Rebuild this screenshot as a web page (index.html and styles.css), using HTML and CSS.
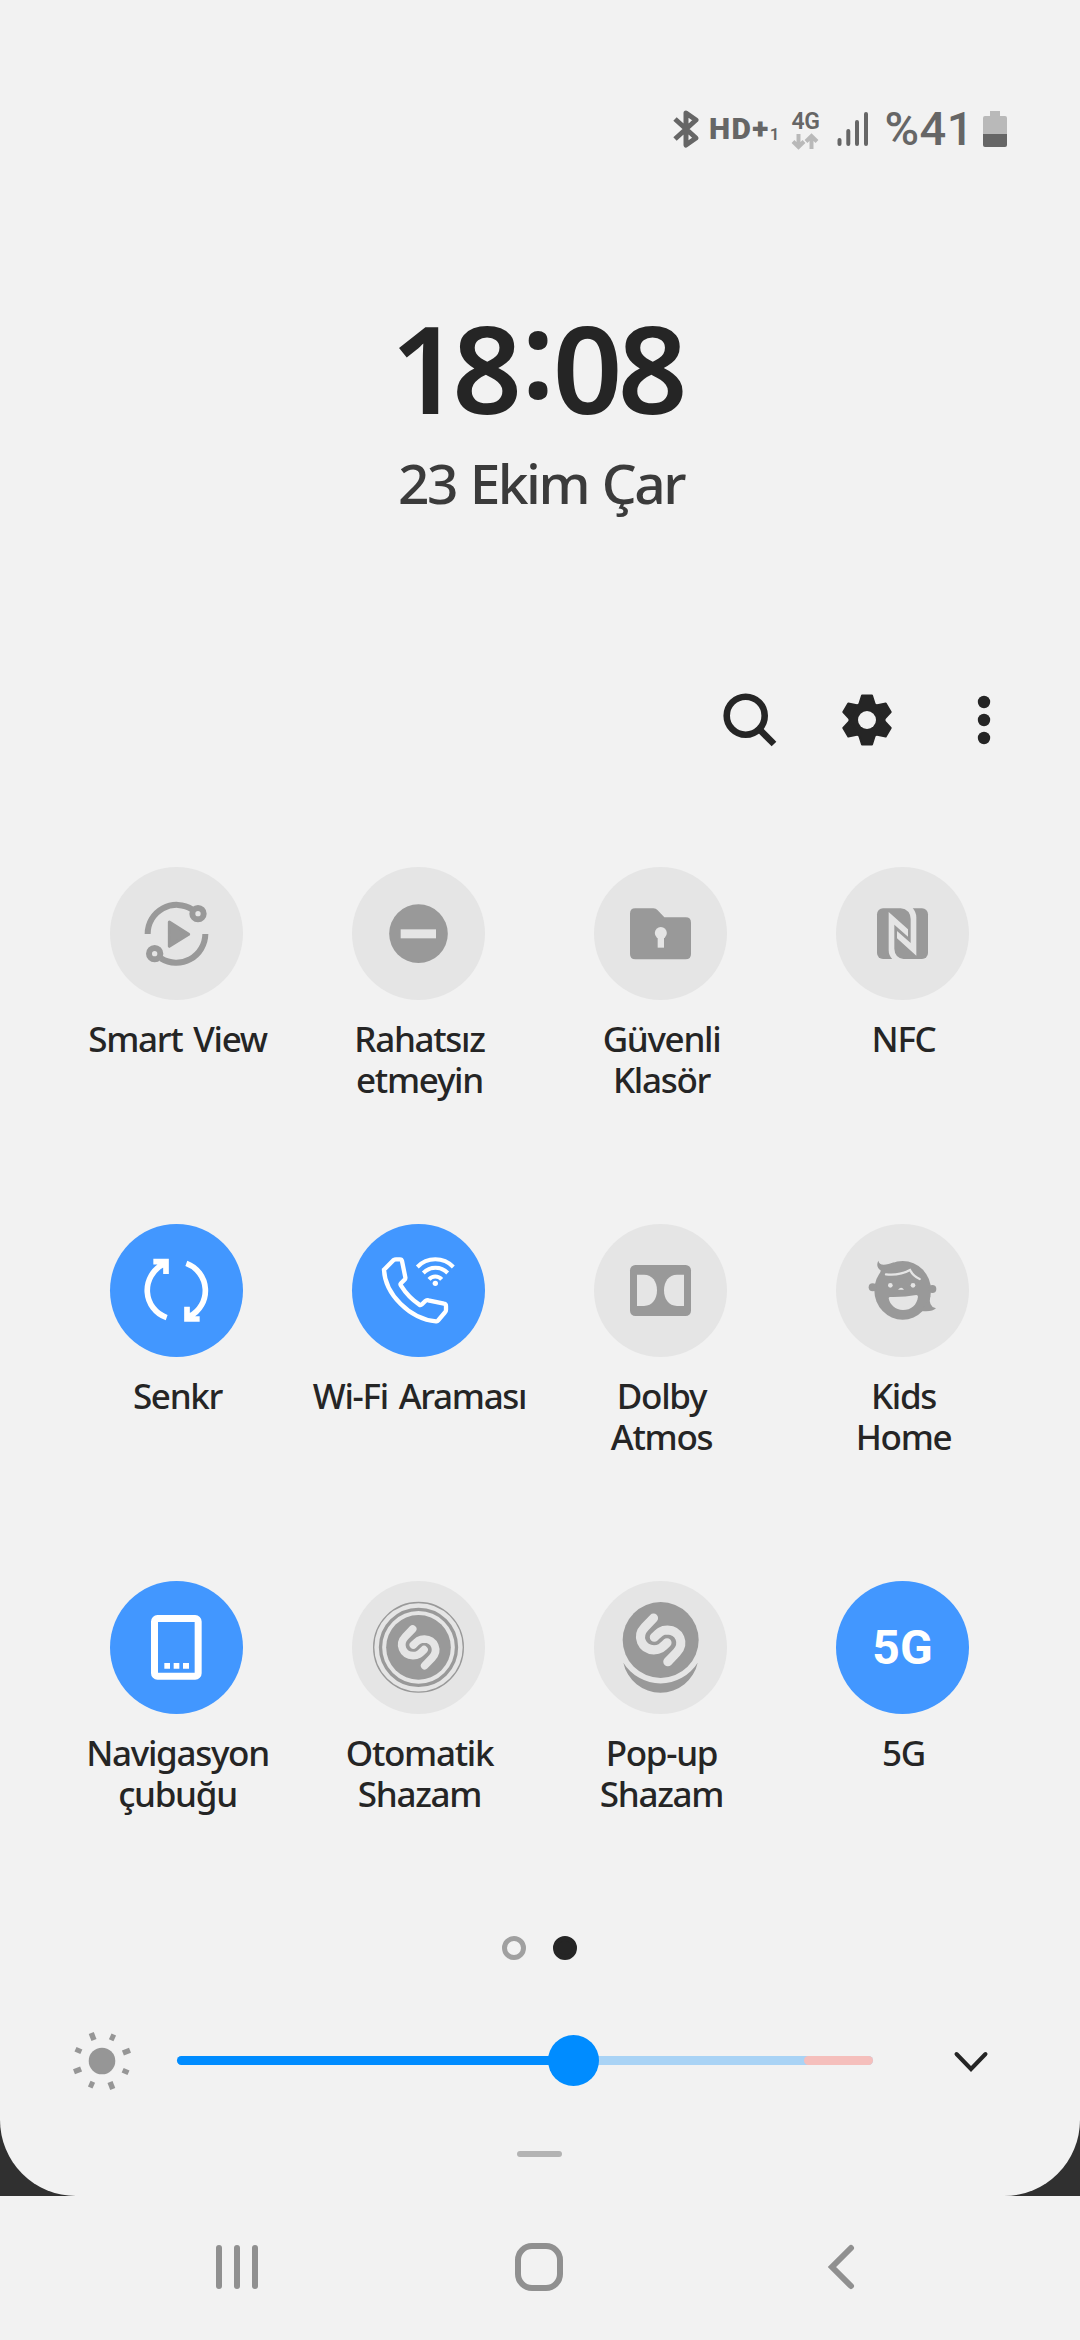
FILE: index.html
```html
<!DOCTYPE html>
<html lang="tr">
<head>
  <meta charset="utf-8">
  <meta name="viewport" content="width=device-width, initial-scale=1">
  <title>Hızlı Panel</title>

  <link rel="stylesheet" href="styles.css">
</head>
<body>

  <div class="screen">
    <main class="panel">

      <div class="statusBar">
        <svg class="btIcon" width="28" height="40" viewBox="0 0 28 40">
          <path d="M3 10 L24 29 L14 36 V4 L24 11 L3 30"/>
        </svg>
        <span class="hd">HD+</span>
        <span class="simNumber">1</span>
        <div class="network">
          <span class="networkType">4G</span>
          <svg width="28" height="17" viewBox="0 0 28 17">
            <path d="M7.5 1 V14 M2 8.5 L7.5 14 L13 8.5 M20.5 16 V3 M15 8.5 L20.5 3 L26 8.5"/>
          </svg>
        </div>
        <svg class="signal" width="32" height="36" viewBox="0 0 32 36">
          <path d="M2.5 29 V33 M11.3 20 V33 M20 11 V33 M29 3 V33"/>
        </svg>
        <span class="percent">%41</span>
        <svg class="battery" width="24" height="36" viewBox="0 0 24 36">
          <path class="batteryBody" d="M7 0 H17 V5 H22 Q24 5 24 7 V23 H0 V7 Q0 5 2 5 H7 Z"/>
          <path class="batteryFill" d="M0 23 H24 V34 Q24 36 22 36 H2 Q0 36 0 34 Z"/>
        </svg>
      </div>

      <div class="clock">
        <div class="time"><span class="one">1</span>8<span class="colon">:</span>08</div>
        <div class="date">23 Ekim Çar</div>
      </div>

      <div class="toolbar">
        <svg width="60" height="60" viewBox="0 0 60 60">
          <circle class="searchRing" cx="25.7" cy="25.7" r="19"/>
          <path class="searchRing" d="M39 39 L54 54"/>
        </svg>
        <svg width="60" height="60" viewBox="-30 -30 60 60">
          <circle r="18.5"/>
          <path id="tooth" class="tooth" d="M-5 -24.5 H5 L8 -15 H-8 Z"/>
          <use href="#tooth" transform="rotate(60)"/>
          <use href="#tooth" transform="rotate(120)"/>
          <use href="#tooth" transform="rotate(180)"/>
          <use href="#tooth" transform="rotate(240)"/>
          <use href="#tooth" transform="rotate(300)"/>
          <circle class="hole" r="9"/>
        </svg>
        <svg width="60" height="60" viewBox="0 0 60 60">
          <circle cx="30" cy="12" r="6.2"/>
          <circle cx="30" cy="30" r="6.2"/>
          <circle cx="30" cy="48" r="6.2"/>
        </svg>
      </div>

      <div class="tiles">

        <div class="tile">
          <div class="tileIcon">
            <svg viewBox="0 0 399 399">
              <path class="line w18" d="M113 201 A87 87 0 0 1 248 128 M286 201 A87 87 0 0 1 153 274"/>
              <circle class="line w18" cx="264" cy="140" r="17"/>
              <circle class="line w18" cx="134" cy="260" r="17"/>
              <path class="rounded" d="M178 165 L236 202 L178 238 Z"/>
            </svg>
          </div>
          <div class="tileLabel">Smart View</div>
        </div>

        <div class="tile">
          <div class="tileIcon">
            <svg viewBox="0 0 399 399">
              <circle cx="199.5" cy="200" r="88"/>
              <rect class="cut" x="146" y="187" width="106" height="27"/>
            </svg>
          </div>
          <div class="tileLabel">Rahatsız<br>etmeyin</div>
        </div>

        <div class="tile">
          <div class="tileIcon">
            <svg viewBox="0 0 399 399">
              <path d="M124 124 H178 Q186 124 191 130 L211 151 H275 Q291 151 291 167 V261 Q291 277 275 277 H124 Q108 277 108 261 V140 Q108 124 124 124 Z"/>
              <circle class="cut" cx="200.5" cy="198" r="18"/>
              <rect class="cut" x="191" y="205" width="19" height="37"/>
            </svg>
          </div>
          <div class="tileLabel">Güvenli<br>Klasör</div>
        </div>

        <div class="tile">
          <div class="tileIcon">
            <svg viewBox="0 0 399 399">
              <rect x="123" y="124" width="153" height="152" rx="18"/>
              <path class="cut" d="M158 135 L216 187 V209 L175 173 V245 Q176 273 205 277 H169 Q158 265 158 250 Z"/>
              <path class="cut" d="M241 266 L183 214 V192 L224 228 V156 Q223 128 194 123 H230 Q241 136 241 151 Z"/>
            </svg>
          </div>
          <div class="tileLabel">NFC</div>
        </div>

        <div class="tile">
          <div class="tileIcon on">
            <svg viewBox="0 0 399 399">
              <path class="line w17" d="M170 281 A87 87 0 0 1 160 121 M130 113 H168 V150"/>
              <path class="line w17" d="M229 118 A87 87 0 0 1 239 277 M269 285 H231 V248"/>
            </svg>
          </div>
          <div class="tileLabel">Senkr</div>
        </div>

        <div class="tile">
          <div class="tileIcon on">
            <svg viewBox="0 0 399 399">
              <path class="line w13" d="M96 137 L125 108 Q128 106 132 106 H144 Q149 106 150 111 L160 160 Q161 165 157 168 L147 178 Q144 181 147 185 Q169 220 202 242 Q206 245 210 241 L220 231 Q224 227 229 229 L276 239 Q282 240 282 246 V257 Q282 262 279 265 L258 290 Q256 293 252 292 C173 285 99 210 96 137 Z"/>
              <path class="line w12" d="M196 129 A75 75 0 0 1 304 129 M214 147 A51 51 0 0 1 287 147 M231 166 A25 25 0 0 1 269 166"/>
              <circle cx="250" cy="178" r="8"/>
            </svg>
          </div>
          <div class="tileLabel">Wi-Fi Araması</div>
        </div>

        <div class="tile">
          <div class="tileIcon">
            <svg viewBox="0 0 399 399">
              <rect x="108" y="123" width="183" height="153" rx="16"/>
              <path class="cut" d="M129 152 H150 C175 152 189 173 189 199 S175 246 150 246 H129 Z"/>
              <path class="cut" d="M270 152 H249 C224 152 210 173 210 199 S224 246 249 246 H270 Z"/>
            </svg>
          </div>
          <div class="tileLabel">Dolby<br>Atmos</div>
        </div>

        <div class="tile">
          <div class="tileIcon">
            <svg viewBox="0 0 399 399">
              <ellipse cx="200" cy="199" rx="85" ry="88"/>
              <circle cx="110" cy="190" r="12"/>
              <circle cx="289" cy="195" r="12"/>
              <path d="M127 110 Q131 132 175 114 L133 150 L134 139 Q118 128 127 110 Z"/>
              <path d="M283 215 Q276 248 300 253 Q288 265 256 261 Z"/>
              <path class="line fringe" d="M150 151 Q192 155 222 138 Q232 157 251 165"/>
              <circle class="cut" cx="163" cy="184" r="7"/>
              <circle class="cut" cx="231" cy="184" r="7"/>
              <path class="cut" d="M186 197 Q196 186 204 197 Z"/>
              <path class="cut" d="M158 223 Q158 219 163 219 Q205 220 241 213 Q246 213 246 218 C243 243 225 258 201 258 C178 258 162 243 158 223 Z"/>
            </svg>
          </div>
          <div class="tileLabel">Kids<br>Home</div>
        </div>

        <div class="tile">
          <div class="tileIcon on">
            <svg viewBox="0 0 399 399">
              <rect class="line w21" x="133.5" y="112.5" width="131" height="173" rx="9"/>
              <path d="M163 246 H180 V263 H163 Z M191 246 H208 V263 H191 Z M219 246 H237 V263 H219 Z"/>
            </svg>
          </div>
          <div class="tileLabel">Navigasyon<br>çubuğu</div>
        </div>

        <div class="tile">
          <div class="tileIcon">
            <svg viewBox="0 0 399 399">
              <circle class="line w4" cx="199.5" cy="199" r="134.5"/>
              <circle class="line w10" cx="199.5" cy="199" r="114"/>
              <circle cx="199.5" cy="199" r="97"/>
              <path class="swirl" d="M182 144 L160 167 C138 190 152 223 183 224 C198 224 204 218 216 206 M218 254 L240 231 C262 208 248 175 217 174 C202 174 196 180 184 192"/>
            </svg>
          </div>
          <div class="tileLabel">Otomatik<br>Shazam</div>
        </div>

        <div class="tile">
          <div class="tileIcon">
            <svg viewBox="0 0 399 399">
              <circle cx="200" cy="177" r="114"/>
              <path class="swirl" transform="translate(-38 -60) scale(1.19)" d="M182 144 L160 167 C138 190 152 223 183 224 C198 224 204 218 216 206 M218 254 L240 231 C262 208 248 175 217 174 C202 174 196 180 184 192"/>
              <path d="M88 245 A114 114 0 0 0 311 245 A131 131 0 0 1 88 245 Z"/>
            </svg>
          </div>
          <div class="tileLabel">Pop-up<br>Shazam</div>
        </div>

        <div class="tile">
          <div class="tileIcon on">5G</div>
          <div class="tileLabel">5G</div>
        </div>

      </div>

      <div class="pages">
        <span class="page"></span>
        <span class="page current"></span>
      </div>

      <div class="brightness">
        <svg class="sun" width="60" height="60" viewBox="-30 -30 60 60">
          <circle r="13.3"/>
          <g id="rays">
            <rect x="-2.7" y="-30" width="5.4" height="7.6" transform="rotate(-21)"/>
            <rect x="-2.5" y="-29" width="5" height="6.4" transform="rotate(24)"/>
          </g>
          <use href="#rays" transform="rotate(90)"/>
          <use href="#rays" transform="rotate(180)"/>
          <use href="#rays" transform="rotate(270)"/>
        </svg>
        <div class="track">
          <div class="trackHigh"></div>
          <div class="trackFill" style="width: 57%"></div>
          <div class="thumb" style="left: 57%"></div>
        </div>
        <svg class="chevron" width="40" height="40" viewBox="0 0 40 40">
          <path d="M5.5 13 L20 28 L34.5 13"/>
        </svg>
      </div>

      <div class="handle"></div>

    </main>
  </div>

  <nav class="navBar">
    <svg width="60" height="60" viewBox="0 0 60 60">
      <path d="M12 11 V49 M30 11 V49 M48 11 V49"/>
    </svg>
    <svg width="60" height="60" viewBox="0 0 60 60">
      <rect x="9" y="9" width="42" height="42" rx="14"/>
    </svg>
    <svg width="60" height="60" viewBox="0 0 60 60">
      <path d="M40 11 L21 30 L40 49"/>
    </svg>
  </nav>

</body>
</html>
```
FILE: styles.css
```css
html, body {
  margin: 0;
  padding: 0;
}

body {
  width: 1080px;
  height: 2340px;
  overflow: hidden;
  background: #f2f2f2;
  color: #252525;
  font-family: 'Noto Sans', 'Open Sans', sans-serif;
}

svg {
  display: block;
  flex: none;
}

.screen {
  background: #303030;
}

.panel {
  height: 2196px;
  background: #f2f2f2;
  border-radius: 0 0 76px 76px;
}

/* status bar */

.statusBar {
  display: flex;
  align-items: center;
  height: 258px;
  padding-left: 672px;
  color: #666;
  font-family: Roboto, sans-serif;
}

.btIcon path {
  fill: none;
  stroke: #666;
  stroke-width: 5;
  stroke-linejoin: round;
}

.hd {
  margin-left: 9px;
  font-size: 30px;
  font-weight: 900;
  line-height: 40px;
  letter-spacing: 1.4px;
}

.simNumber {
  margin-top: 9px;
  font-size: 17px;
  font-weight: 600;
  line-height: 20px;
}

.network {
  display: flex;
  flex-direction: column;
  align-items: center;
  width: 28px;
  margin-left: 12px;
  padding-top: 2px;
}

.networkType {
  font-size: 23px;
  font-weight: 600;
  line-height: 22px;
  letter-spacing: -0.5px;
}

.network svg path {
  fill: none;
  stroke: #b9b9b9;
  stroke-width: 4;
}

.signal {
  margin-left: 18px;
}

.signal path {
  stroke: #666;
  stroke-width: 4;
  stroke-linecap: round;
}

.percent {
  margin-left: 15px;
  width: 88px;
  font-size: 47px;
  font-weight: 500;
  line-height: 50px;
  letter-spacing: 0.5px;
}

.battery {
  margin-left: 11px;
}

.batteryBody {
  fill: #b9b9b9;
}

.batteryFill {
  fill: #666;
}

/* clock */

.clock {
  padding-top: 48px;
  text-align: center;
}

.time {
  padding-right: 7px;
  font-size: 122px;
  font-weight: 560;
  line-height: 122px;
  letter-spacing: -5px;
}

.one {
  letter-spacing: -8px;
}

.colon {
  position: relative;
  top: -16px;
  margin: 0 3px 0 4px;
}

.date {
  margin-top: 20px;
  padding-left: 2px;
  color: #3b3b3b;
  font-size: 55px;
  font-weight: 500;
  line-height: 70px;
  letter-spacing: -2.5px;
  word-spacing: 2px;
}

/* search, settings, more */

.toolbar {
  display: flex;
  gap: 57px;
  margin-top: 172px;
  padding-left: 720px;
}

.toolbar svg {
  fill: #252525;
}

.toolbar .searchRing {
  fill: none;
  stroke: #252525;
  stroke-width: 6.6;
}

.toolbar .tooth {
  stroke: #252525;
  stroke-width: 2;
  stroke-linejoin: round;
}

.toolbar .hole {
  fill: #f2f2f2;
}

/* tiles */

.tiles {
  display: grid;
  grid-template-columns: repeat(4, 242px);
  grid-auto-rows: 233px;
  row-gap: 124px;
  margin-top: 117px;
  padding-left: 55.5px;
}

.tile {
  display: flex;
  flex-direction: column;
  align-items: center;
}

.tileIcon {
  display: flex;
  align-items: center;
  justify-content: center;
  width: 133px;
  height: 133px;
  border-radius: 50%;
  background: #e5e5e5;
}

.tileIcon.on {
  background: #4297ff;
  color: #fff;
  font-family: Roboto, sans-serif;
  font-size: 48px;
  font-weight: 700;
}

.tileIcon svg {
  width: 133px;
  height: 133px;
  fill: #999;
  stroke: none;
}

.tileIcon.on svg {
  fill: #fff;
}

.tileIcon .cut {
  fill: #e5e5e5;
}

.tileIcon .line {
  fill: none;
  stroke: #999;
}

.tileIcon.on .line {
  stroke: #fff;
}

.tileIcon .rounded {
  stroke: #999;
  stroke-width: 9;
  stroke-linejoin: round;
}

.tileIcon .fringe {
  stroke: #e5e5e5;
  stroke-width: 7;
  stroke-linecap: round;
}

.tileIcon .swirl {
  fill: none;
  stroke: #e5e5e5;
  stroke-width: 23;
  stroke-linecap: round;
}

.w4 { stroke-width: 4; }
.w10 { stroke-width: 10; }
.w12 { stroke-width: 12; }
.w13 { stroke-width: 13; }
.w17 { stroke-width: 17; }
.w18 { stroke-width: 18; }
.w21 { stroke-width: 21; }

.tileLabel {
  margin-top: 18px;
  padding-left: 2px;
  font-size: 35px;
  font-weight: 500;
  line-height: 41px;
  letter-spacing: -1.3px;
  word-spacing: 3px;
  text-align: center;
  white-space: nowrap;
}

/* page dots */

.pages {
  display: flex;
  gap: 27px;
  margin-top: 122px;
  padding-left: 502px;
}

.page {
  box-sizing: border-box;
  width: 24px;
  height: 24px;
  border: 5px solid #a0a0a0;
  border-radius: 50%;
}

.page.current {
  border-color: #252525;
  background: #252525;
}

/* brightness slider */

.brightness {
  display: flex;
  align-items: center;
  height: 51px;
  margin-top: 75px;
  padding-left: 72px;
}

.sun {
  fill: #969696;
}

.track {
  position: relative;
  display: flex;
  justify-content: flex-end;
  width: 696px;
  height: 9px;
  margin-left: 45px;
  border-radius: 5px;
  background: #a9d3f5;
}

.trackHigh {
  width: 69px;
  border-radius: 5px;
  background: #f5bfbc;
}

.trackFill {
  position: absolute;
  top: 0;
  left: 0;
  height: 100%;
  border-radius: 5px;
  background: #008cff;
}

.thumb {
  position: absolute;
  top: -21px;
  width: 51px;
  height: 51px;
  margin-left: -26px;
  border-radius: 50%;
  background: #008cff;
}

.chevron {
  margin-left: 77.5px;
}

.chevron path {
  fill: none;
  stroke: #252525;
  stroke-width: 4;
  stroke-linecap: round;
}

.handle {
  width: 45px;
  height: 6px;
  margin: 65px 0 0 517px;
  border-radius: 3px;
  background: #b3b3b3;
}

/* navigation bar */

.navBar {
  display: flex;
  align-items: center;
  gap: 242px;
  height: 142px;
  padding-left: 207px;
}

.navBar svg {
  fill: none;
  stroke: #909090;
  stroke-width: 6;
  stroke-linecap: round;
}
```
